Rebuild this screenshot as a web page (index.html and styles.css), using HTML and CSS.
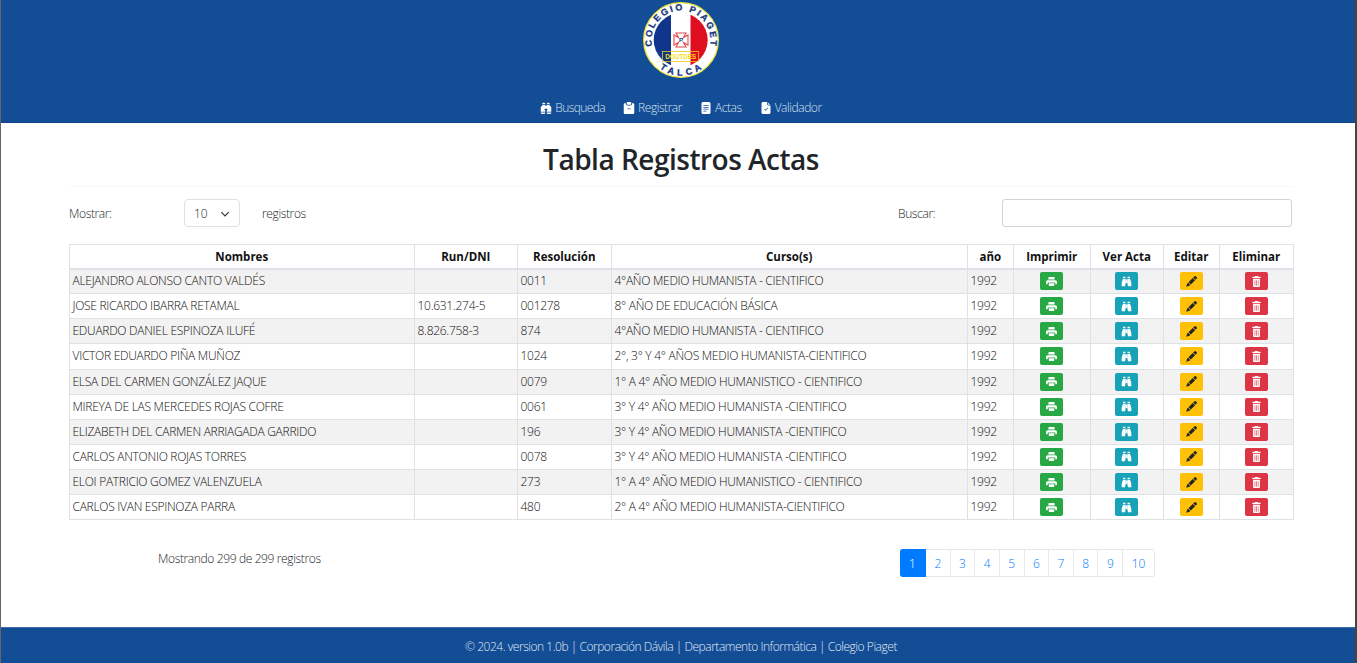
FILE: index.html
```
<!DOCTYPE html>
<html lang="es">
<head>
<meta charset="utf-8">
<title>Tabla Registros Actas</title>
<link rel="stylesheet" href="styles.css">
</head>
<body>
<svg class="sprite" aria-hidden="true">
  <symbol id="bino" viewBox="0 0 16 16"><path d="M4.500 1A1.500 1.500 0 0 0 3 2.500V3h4v-.5A1.500 1.500 0 0 0 5.500 1zM7 4v1h2V4h4v.882a.5.5 0 0 0 .276.447l.895.447A1.500 1.500 0 0 1 15 7.118V13H9v-1.500a.5.5 0 0 1 .146-.354l.854-.853V9.500a.5.5 0 0 0-.5-.5h-3a.5.5 0 0 0-.5.5v.793l.854.853A.5.5 0 0 1 7 11.500V13H1V7.118a1.500 1.500 0 0 1 .83-1.342l.894-.447A.5.5 0 0 0 3 4.882V4zM1 14v.5A1.500 1.500 0 0 0 2.500 16h3A1.500 1.500 0 0 0 7 14.500V14zm8 0v.5a1.500 1.500 0 0 0 1.500 1.500h3a1.500 1.500 0 0 0 1.500-1.500V14zm4-11v-.5A1.500 1.500 0 0 0 11.500 1h-1A1.500 1.500 0 0 0 9 2.500V3z"/></symbol>
  <symbol id="clip" viewBox="0 0 16 16"><path fill-rule="evenodd" d="M6 0h4a1 1 0 0 1 1 1v1.500a1 1 0 0 1-1 1H6a1 1 0 0 1-1-1V1a1 1 0 0 1 1-1zM4 1.500H2.500A1.500 1.500 0 0 0 1 3v11.500A1.500 1.500 0 0 0 2.500 16h11a1.500 1.500 0 0 0 1.500-1.500V3a1.500 1.500 0 0 0-1.500-1.500H12v1.300a1.700 1.700 0 0 1-1.700 1.700H5.700A1.700 1.700 0 0 1 4 2.800zM6 8.500h4v1.200H6z"/></symbol>
  <symbol id="doc" viewBox="0 0 16 16"><path fill-rule="evenodd" d="M4 0h8a2 2 0 0 1 2 2v12a2 2 0 0 1-2 2H4a2 2 0 0 1-2-2V2a2 2 0 0 1 2-2zM4.500 4v1h7V4zm0 2.500v1h7v-1zm0 2.500v1h7V9zm0 2.500v1h4v-1z"/></symbol>
  <symbol id="check" viewBox="0 0 16 16"><path fill-rule="evenodd" d="M4 0h5.500v3A1.500 1.500 0 0 0 11 4.500h3V14a2 2 0 0 1-2 2H4a2 2 0 0 1-2-2V2a2 2 0 0 1 2-2zm6.500.6V3a.5.5 0 0 0 .5.5h2.500zM10.500 7.200 7.500 10.200 6.200 8.900l-.7.7 2 2 3.700-3.700z"/></symbol>
  <symbol id="print" viewBox="0 0 16 16"><path fill-rule="evenodd" d="M4.500 1.500h7a1 1 0 0 1 1 1V5h-9V2.500a1 1 0 0 1 1-1zM2.500 6h11A2.500 2.500 0 0 1 16 8.500V11a1 1 0 0 1-1 1h-1.500V9.500h-11V12H1a1 1 0 0 1-1-1V8.500A2.500 2.500 0 0 1 2.500 6zM4 10.500h8v3a1 1 0 0 1-1 1H5a1 1 0 0 1-1-1z"/></symbol>
  <symbol id="view" viewBox="0 0 16 16"><path d="M3 1h3.500v2H3zm6.500 0H13v2H9.500zM2.800 4h3.900v8.500H6V15H1v-4.500c0-2.500 1.500-4 1.800-6.500zm6.500 0h3.900c.3 2.500 1.800 4 1.800 6.500V15h-5v-2.500h-.7zM7 5h2v5H7z"/></symbol>
  <symbol id="pen" viewBox="0 0 16 16"><path d="M10.300 2.300 12.100.7a1.900 1.900 0 0 1 2.600 0l.6.6a1.900 1.900 0 0 1 0 2.600L13.900 5.500zM9.800 2.800 13.200 6.200 7 12.400 3.600 9zM3 9.700 6.300 13 5 14.200.3 15.700 1.700 11z"/></symbol>
  <symbol id="trash" viewBox="0 0 16 16"><path fill-rule="evenodd" d="M5.500 1 6 0h4l.5 1H14v2H2V1zM3 4h10v10.500a1.500 1.500 0 0 1-1.500 1.500h-7A1.500 1.500 0 0 1 3 14.500zm2.300 2v8h.9V6zm2.300 0v8h.9V6zm2.300 0v8h.9V6z"/></symbol>
</svg>
<header class="top">
  <svg class="logo" viewBox="0 0 78 78">
    <defs>
      <clipPath id="disc"><circle cx="38.700" cy="39" r="27"/></clipPath>
      <path id="upper" d="M10.140 45.130A29.500 29.500 0 1 1 67.860 45.130"/>
      <path id="lower" d="M17.600 67.350A35.500 35.500 0 0 0 60.400 67.350"/>
    </defs>
    <circle cx="39" cy="39" r="37.300" class="ring"/>
    <g clip-path="url(#disc)"><path fill="#10358a" d="M11 11h18v56H11z"/><path fill="#fff" d="M29 11h19.500v56H29z"/><path fill="#df0d20" d="M48.500 11h18v56h-18z"/></g>
    <path class="cross" d="M34 32h10l-2.500 4.500 4.500-2.500v10l-4.500-2.500 2.500 4.500H34l2.500-4.500L32 44V34l4.500 2.500z"/>
    <text class="p" x="39" y="41.300">P</text>
    <rect x="20.500" y="50.500" width="36" height="10" class="box"/>
    <text class="motto" x="38.700" y="58" textLength="31">DOUTDES</text>
    <text class="ringtext"><textPath href="#upper" textLength="104">COLEGIO PIAGET</textPath></text>
    <text class="ringtext"><textPath href="#lower" textLength="45">TALCA</textPath></text>
  </svg>
  <nav class="menu">
    <a><svg><use href="#bino"/></svg><span>Busqueda</span></a>
    <a><svg><use href="#clip"/></svg><span>Registrar</span></a>
    <a><svg><use href="#doc"/></svg><span>Actas</span></a>
    <a><svg><use href="#check"/></svg><span>Validador</span></a>
  </nav>
</header>
<main>
  <h1>Tabla Registros Actas</h1>
  <section class="filters">
    <span class="show">Mostrar:</span>
    <span class="select">10<svg viewBox="0 0 16 16"><path d="m2 5 6 6 6-6"/></svg></span>
    <span class="records">registros</span>
    <label for="q">Buscar:</label><input id="q" class="search">
  </section>
  <table>
    <colgroup><col class="c1"><col class="c2"><col class="c3"><col class="c4"><col class="c5"><col class="c6"><col class="c7"><col class="c8"><col class="c9"></colgroup>
    <thead><tr><th>Nombres</th><th>Run/DNI</th><th>Resolución</th><th>Curso(s)</th><th>año</th><th>Imprimir</th><th>Ver Acta</th><th>Editar</th><th>Eliminar</th></tr></thead>
    <tbody id="rows"></tbody>
  </table>
  <section class="bottom">
    <p>Mostrando 299 de 299 registros</p>
    <div class="pages"><a class="on">1</a><a>2</a><a>3</a><a>4</a><a>5</a><a>6</a><a>7</a><a>8</a><a>9</a><a class="wide">10</a></div>
  </section>
</main>
<footer><span>© 2024. version 1.0b | Corporación Dávila | Departamento Informática | Colegio Piaget</span></footer>
<script src="rows.js"></script>
</body>
</html>
```
FILE: styles.css
```
* { box-sizing: border-box; }
body { margin: 0; height: 663px; display: flex; flex-direction: column; overflow: hidden; font: 350 12px/16px "Open Sans", "Noto Sans", sans-serif; letter-spacing: -.37px; color: #212529; background: #fff; border-left: 1px solid #666; border-right: 2px solid #444; }
.sprite { position: absolute; width: 0; height: 0; }
.top { height: 123px; flex: none; background: #124d96; border-bottom: 1px solid #0c428b; display: flex; flex-direction: column; align-items: center; padding-left: 6px; }
.logo { width: 78px; height: 78px; margin-top: 1px; letter-spacing: 0; }
.ring { fill: #fff; stroke: #eee83e; stroke-width: 1.300; }
.cross { fill: #fff; stroke: #e04a4a; stroke-width: 1.100; }
.p { font: 700 6px "Liberation Sans", sans-serif; fill: #10358a; text-anchor: middle; }
.box { fill: none; stroke: #e5c91c; stroke-width: .8; }
.motto { font: 700 6.500px "Liberation Sans", sans-serif; fill: #f5df16; text-anchor: middle; }
.ringtext { font: 700 9px "Liberation Sans", sans-serif; fill: #17357f; stroke: #17357f; stroke-width: .3; }
.menu { display: flex; gap: 18px; margin-top: 21px; color: #d5e0ee; letter-spacing: -.45px; }
.menu a { display: flex; align-items: center; gap: 3px; height: 16px; white-space: nowrap; }
.menu svg { width: 12px; height: 12px; fill: #fff; }
.menu a:first-child { letter-spacing: -.6px; }
main { flex: 1; padding: 0 62px 0 68px; }
h1 { margin: 0 0 12px; height: 64px; padding-top: 19px; text-align: center; font-size: 28px; line-height: 34px; font-weight: 600; letter-spacing: -.5px; border-bottom: 1px solid #f8f8f8; }
.filters { display: flex; align-items: center; height: 28px; margin-bottom: 17px; }
.filters span, .filters label { padding-top: 2px; }
.show { width: 115px; }
.filters .select { width: 56px; height: 28px; border: 1px solid #dee2e6; border-radius: 4px; display: flex; align-items: center; justify-content: space-between; padding: 1px 9px 0; letter-spacing: 0; }
.select svg { width: 10px; height: 10px; fill: none; stroke: #343a40; stroke-width: 2; }
.records { margin-left: 22px; width: 636px; }
.filters label { width: 104px; }
.search { width: 290px; height: 28px; border: 1px solid #ced4da; border-radius: 3px; background: #fff; }
table { table-layout: fixed; border-collapse: collapse; width: 1225px; color: #111; letter-spacing: -.28px; }
.c1 { width: 345px; } .c2 { width: 103px; } .c3 { width: 94px; } .c4 { width: 356px; } .c5 { width: 46px; } .c6 { width: 77px; } .c7 { width: 73px; } .c8 { width: 56px; } .c9 { width: 74px; }
th, td { border: 1px solid #dee2e6; padding: 0 3px 0 2.500px; white-space: nowrap; }
th { height: 24px; padding-top: 2px; font-size: 11.500px; font-weight: 700; letter-spacing: 0; border-bottom-width: 2px; text-align: center; }
td { height: 25.130px; }
tbody tr:nth-child(odd) { background: #f2f2f2; }
td.act { text-align: center; }
.btn { display: flex; align-items: center; justify-content: center; width: 23px; height: 18px; margin: 0 auto; border-radius: 2px; fill: #fff; }
.btn svg { width: 11px; height: 11px; }
.print { background: #28a745; } .view { background: #17a2b8; } .pen { background: #ffc107; fill: #212529; } .trash { background: #dc3545; }
.bottom { display: flex; margin-top: 29px; }
.bottom p { margin: 2px 0 0 89px; width: 742px; }
.pages { display: flex; color: #007bff; letter-spacing: 0; }
.pages a { width: 24.650px; height: 28px; text-align: center; border: 1px solid #e6e9ec; border-left: 0; line-height: 27px; }
.pages .on { width: 26px; color: #fff; background: #007bff; border-color: #007bff; border-radius: 3px 0 0 3px; }
.pages .wide { width: 32px; border-radius: 0 3px 3px 0; }
footer { flex: none; height: 36px; background: #124d96; border-top: 1px solid #3b6ca7; color: #e1eaf4; display: flex; justify-content: center; align-items: center; padding: 2px 0 0 6px; letter-spacing: -.47px; }
```
FILE: rows.js
```
const rows = [
  ["ALEJANDRO ALONSO CANTO VALDÉS", "", "0011", "4°AÑO MEDIO HUMANISTA - CIENTIFICO"],
  ["JOSE RICARDO IBARRA RETAMAL", "10.631.274-5", "001278", "8° AÑO DE EDUCACIÓN BÁSICA"],
  ["EDUARDO DANIEL ESPINOZA ILUFÉ", "8.826.758-3", "874", "4°AÑO MEDIO HUMANISTA - CIENTIFICO"],
  ["VICTOR EDUARDO PIÑA MUÑOZ", "", "1024", "2°, 3° Y 4° AÑOS MEDIO HUMANISTA-CIENTIFICO"],
  ["ELSA DEL CARMEN GONZÁLEZ JAQUE", "", "0079", "1° A 4° AÑO MEDIO HUMANISTICO - CIENTIFICO"],
  ["MIREYA DE LAS MERCEDES ROJAS COFRE", "", "0061", "3° Y 4° AÑO MEDIO HUMANISTA -CIENTIFICO"],
  ["ELIZABETH DEL CARMEN ARRIAGADA GARRIDO", "", "196", "3° Y 4° AÑO MEDIO HUMANISTA -CIENTIFICO"],
  ["CARLOS ANTONIO ROJAS TORRES", "", "0078", "3° Y 4° AÑO MEDIO HUMANISTA -CIENTIFICO"],
  ["ELOI PATRICIO GOMEZ VALENZUELA", "", "273", "1° A 4° AÑO MEDIO HUMANISTICO - CIENTIFICO"],
  ["CARLOS IVAN ESPINOZA PARRA", "", "480", "2° A 4° AÑO MEDIO HUMANISTA-CIENTIFICO"]
];
const actions = ["print", "view", "pen", "trash"]
  .map(a => `<td class="act"><span class="btn ${a}"><svg><use href="#${a}"/></svg></span></td>`).join("");
document.getElementById("rows").innerHTML = rows
  .map(r => "<tr>" + [...r, "1992"].map(t => `<td><span>${t}</span></td>`).join("") + actions + "</tr>").join("");
```
